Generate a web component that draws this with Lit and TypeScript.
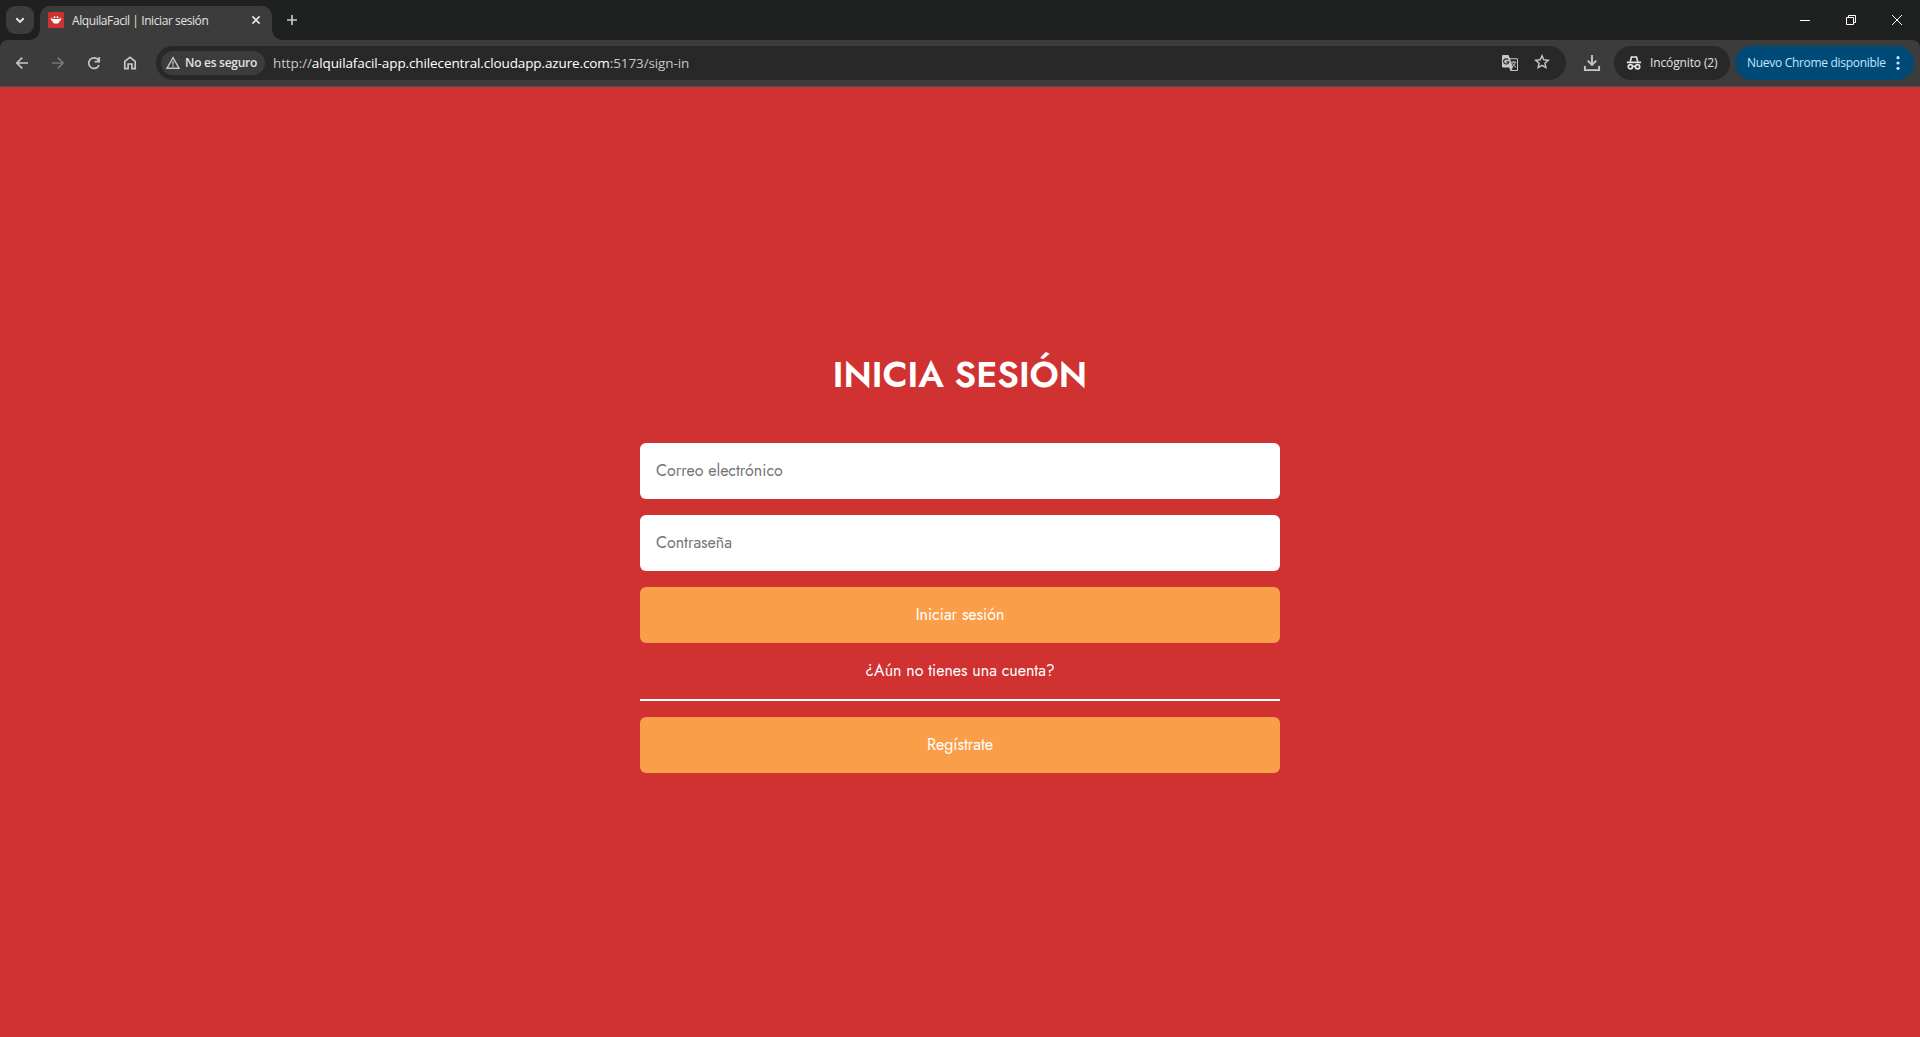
import { LitElement, html, css } from "lit";
import { customElement } from "lit/decorators.js";

@customElement("browser-chrome")
class BrowserChrome extends LitElement {
  static styles = css`
    :host { display: block; font: 12px/16px "Open Sans", "Noto Sans", sans-serif; color: #e3e3e3; }
    svg { display: block; flex: none; fill: none; stroke: #c7c7c7; stroke-width: 1.7; }
    .strip { display: flex; height: 40px; background: #1f2120; box-sizing: border-box; padding-left: 6px; }
    .search { width: 28px; height: 28px; margin: 6px 6px 0 0; border-radius: 9px; background: #3c3c3c; display: grid; place-items: center; }
    .tab { position: relative; box-sizing: border-box; width: 232px; height: 34px; margin-top: 6px; padding: 0 8px 6px; border-radius: 10px 10px 0 0; background: #3c3c3c; display: flex; align-items: center; }
    .tab::before, .tab::after { content: ""; position: absolute; bottom: 0; width: 10px; height: 10px; }
    .tab::before { left: -10px; background: radial-gradient(circle at 0 0, transparent 9.5px, #3c3c3c 10px); }
    .tab::after { right: -10px; background: radial-gradient(circle at 100% 0, transparent 9.5px, #3c3c3c 10px); }
    .title { width: 176px; margin-left: 8px; padding-top: 2px; white-space: nowrap; font-size: 12px; letter-spacing: -0.42px; }
    .plus { margin: 12px 0 0 12px; }
    .controls { margin-left: auto; display: flex; padding: 12px 14px 0 0; gap: 30px; }
    .controls svg { stroke: #fff; stroke-width: 1; }
    .bar { display: flex; align-items: center; height: 47px; box-sizing: border-box; padding: 0 6px 1px 14px; background: #3c3c3c; border-bottom: 1px solid #4b4b4b; border-radius: 8px 8px 0 0; }
    .under { background: #1f2120; }
    .nav { display: flex; gap: 20px; width: 142px; }
    .omni { display: flex; align-items: center; width: 1410px; height: 34px; box-sizing: border-box; padding: 0 16px 0 5px; border-radius: 17px; background: #282828; white-space: nowrap; }
    .chip { display: flex; align-items: center; box-sizing: border-box; width: 104px; height: 24px; padding-left: 4px; gap: 4px; border-radius: 12px; background: #3c3c3c; font-weight: 600; letter-spacing: -0.27px; }
    .url { margin-left: 8px; flex: 1; font-size: 13.5px; color: #c7c7c7; letter-spacing: -0.11px; }
    .host { color: #fff; }
    .tools { display: flex; gap: 15px; }
    .download { margin: 0 12px 0 16px; }
    .pill { display: flex; align-items: center; box-sizing: border-box; height: 34px; border-radius: 17px; white-space: nowrap; }
    .incognito { width: 116px; padding-left: 12px; gap: 8px; background: #282828; letter-spacing: -0.13px; }
    .update { width: 179px; margin-left: 5px; padding-left: 12px; background: #004a77; color: #c2e7ff; letter-spacing: -0.3px; }
    .update span { width: 143px; }
  `;
  render() {
    return html`
      <div class="strip">
        <div class="search"><svg width="16" height="16"><path d="M4.3 6.2 8 9.9l3.7-3.7" stroke="#e3e3e3" stroke-width="2"/></svg></div>
        <div class="tab">
          <svg width="16" height="16"><rect width="16" height="16" rx="1.5" fill="#d03232" stroke="none"/><g fill="#fff" stroke="none"><path d="M4.4 7h7.2l-.4 3.4-1.5 1.1H6.3l-1.5-1.1z"/><circle cx="6.5" cy="5.3" r="1"/><circle cx="9.5" cy="5.3" r="1"/><path d="M2.8 5.8 6 7.6l-1 1.7-1.8-.8zM13.2 5.8 10 7.6l1 1.7 1.8-.8z"/></g></svg>
          <span class="title">AlquilaFacil | Iniciar sesión</span>
          <svg width="16" height="16"><path d="m4.4 4.4 7.2 7.2m0-7.2-7.2 7.2" stroke="#e3e3e3"/></svg>
        </div>
        <svg class="plus" width="16" height="16"><path d="M8 3v10M3 8h10"/></svg>
        <div class="controls">
          <svg width="16" height="16"><path d="M2 8.5h10"/></svg>
          <svg width="16" height="16"><path d="M2.5 5.5h7v7h-7zM4.5 5.5v-2h7v7h-2"/></svg>
          <svg width="16" height="16"><path d="m2 3 10 10m0-10L2 13"/></svg>
        </div>
      </div>
      <div class="under"><div class="bar">
        <div class="nav">
          <svg width="16" height="16"><path d="M14 8H3m5.2-5.4L2.8 8l5.4 5.4"/></svg>
          <svg width="16" height="16"><path d="M2 8h11M7.8 2.6 13.2 8l-5.4 5.4" stroke="#777"/></svg>
          <svg width="16" height="16"><path d="M13 10A5.3 5.3 0 1 1 12.5 5.3M13.2 2v4.6H8.6"/></svg>
          <svg width="16" height="16"><path d="M2.8 6.4 8 2.3l5.2 4.1v7.3H9.9V9H6.1v4.7H2.8z"/></svg>
        </div>
        <div class="omni">
          <div class="chip"><svg width="16" height="16"><path d="M8 2.6 14 13.2H2z" stroke-width="1.4"/><path d="M8 6.3v3.5M8 10.6v1.4" stroke-width="1.3"/></svg>No es seguro</div>
          <span class="url">http://<span class="host">alquilafacil-app.chilecentral.cloudapp.azure.com</span>:5173/sign-in</span>
          <div class="tools">
            <svg width="18" height="18"><path d="M2 1h5.6l1.2 3.2H16q1 0 1 1V16q0 1-1 1H9.4l-1.2-3.6H2q-1 0-1-1V2q0-1 1-1z" fill="#c7c7c7" stroke="none"/><path d="M9.2 5.2H16V16h-5.6l1.5-2.6z" fill="#282828" stroke="none"/><path d="M7.2 5.7a2.6 2.6 0 1 0 .6 2.1H5.4" stroke="#282828" stroke-width="1.2"/><path d="M10.2 8.2h5M12.7 7v1.2m1.6 0c-.4 2.2-1.9 3.8-3.5 4.6m.7-3.4c.6 1.8 2 3 3.6 3.8" stroke-width="1"/></svg>
            <svg width="16" height="16"><path d="m8 1.7 1.8 4.1 4.5.4-3.4 3 1 4.4L8 11.3l-3.9 2.3 1-4.4-3.4-3 4.5-.4z" stroke-width="1.4"/></svg>
          </div>
        </div>
        <svg class="download" width="20" height="20"><path d="M10 2v9.5M5.7 7.7l4.3 4.3 4.3-4.3M2.9 13v4.1h14.2V13" stroke-width="1.9"/></svg>
        <div class="pill incognito"><svg width="16" height="16"><path d="M4.3 6.4 5.5 2h5l1.2 4.4M.9 7.4h14.2" stroke="#e3e3e3" stroke-width="1.7"/><circle cx="4.4" cy="11.7" r="2.1" stroke="#e3e3e3"/><circle cx="11.6" cy="11.7" r="2.1" stroke="#e3e3e3"/><path d="M6.5 11.3h3" stroke="#e3e3e3"/></svg>Incógnito (2)</div>
        <div class="pill update"><span>Nuevo Chrome disponible</span><svg width="16" height="16"><g fill="#c2e7ff" stroke="none"><circle cx="8" cy="2.7" r="1.6"/><circle cx="8" cy="8" r="1.6"/><circle cx="8" cy="13.3" r="1.6"/></g></svg></div>
      </div></div>
    `;
  }
}

@customElement("sign-in-form")
class SignInForm extends LitElement {
  static styles = css`
    :host { display: flex; flex: 1; justify-content: center; background: #d03232; color: #fff; font: 16px/24px Jost, Lato, sans-serif; }
    form { display: flex; flex-direction: column; width: 640px; gap: 16px; }
    h1 { margin: 261px 0 27px; font-size: 36px; line-height: 52px; font-weight: 600; text-align: center; white-space: nowrap; }
    input, button { box-sizing: border-box; width: 100%; height: 56px; flex: none; margin: 0; border: 0; border-radius: 6px; padding: 0 16px; font: inherit; color: #fff; }
    input { background: #fff; color: #222; padding-bottom: 2px; }
    input::placeholder { color: #757575; opacity: 1; }
    button { background: #fb9e4a; }
    p { margin: 0; text-align: center; height: 24px; }
    hr { width: 100%; height: 2px; margin: 0; border: 0; background: #fff; }
  `;
  render() {
    return html`<form>
      <h1>INICIA SESIÓN</h1>
      <input class="email" type="email" placeholder="Correo electrónico">
      <input class="password" type="password" placeholder="Contraseña">
      <button class="enter" type="button">Iniciar sesión</button>
      <p>¿Aún no tienes una cuenta?</p>
      <hr>
      <button class="register" type="button">Regístrate</button>
    </form>`;
  }
}

@customElement("app-root")
class AppRoot extends LitElement {
  static styles = css`:host { display: flex; flex-direction: column; height: 1037px; overflow: hidden; }`;
  render() {
    return html`<browser-chrome></browser-chrome><sign-in-form></sign-in-form>`;
  }
}
